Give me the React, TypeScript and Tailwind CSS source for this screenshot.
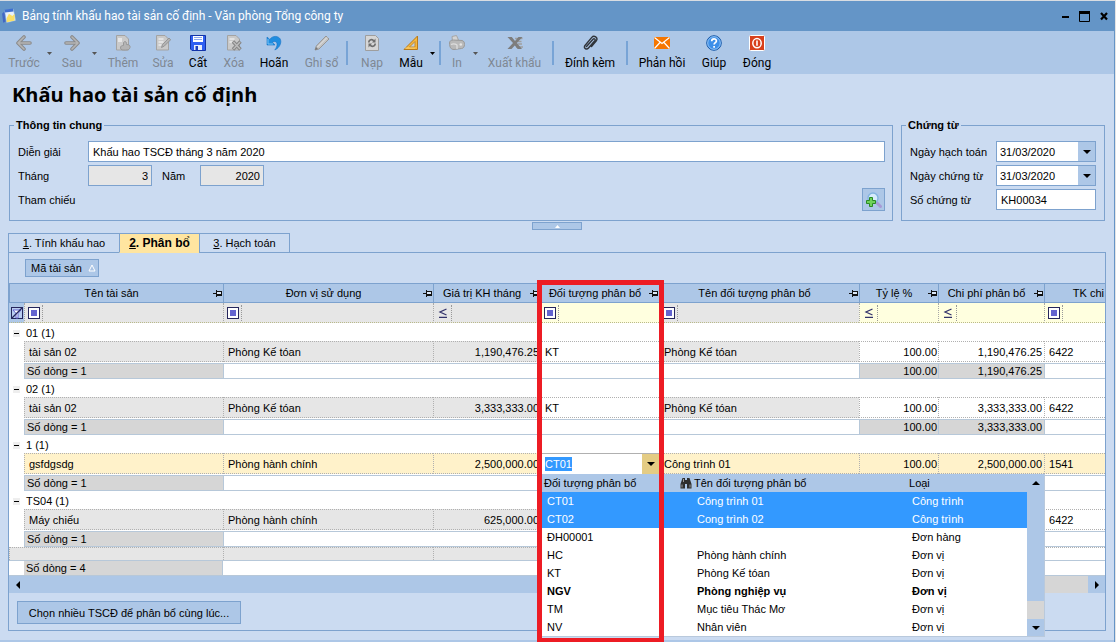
import type { FocusEvent, ReactNode } from 'react';

const uiFont = "font-['Open_Sans','Noto_Sans',sans-serif]";
const barFont = "font-['Roboto','Noto_Sans',sans-serif]";

function Triangle({ dir, className = '' }: { dir: 'up' | 'down' | 'left' | 'right'; className?: string }) {
  const points = {
    up: '0,6 4,2 8,6',
    down: '0,2 8,2 4,6',
    left: '6,0 6,8 2,4',
    right: '2,0 2,8 6,4',
  }[dir];
  return (
    <svg width="8" height="8" viewBox="0 0 8 8" className={className} aria-hidden="true">
      <polygon points={points} fill="currentColor" />
    </svg>
  );
}

function Pin() {
  return (
    <svg width="9" height="9" viewBox="0 0 9 9" className="mr-px shrink-0" aria-hidden="true" shapeRendering="crispEdges">
      <path d="M0 4h3v1H0zM3 1h1v7H3zM4 2h5v1H4zM8 2h1v5H8zM4 5h5v2H4z" fill="#111" />
      <path d="M4 3h4v2H4z" fill="#dce8f7" />
    </svg>
  );
}

/* ---------- toolbar icons ---------- */

const PageShape = () => (
  <path d="M1.500.500h8.500l3.500 3.500v11h-12z" fill="#cacaca" stroke="#a3a3a3" />
);

const icons: Record<string, ReactNode> = {
  back: (
    <>
      <path d="M8 2 2 8l6 6M2.500 8H14" fill="none" stroke="#8a8a8a" strokeWidth="3.600" strokeLinejoin="round" strokeLinecap="round" />
      <path d="M8 2 2 8l6 6M2.500 8H14" fill="none" stroke="#b5b5b5" strokeWidth="1.600" strokeLinejoin="round" strokeLinecap="round" />
    </>
  ),
  forward: (
    <>
      <path d="m8 2 6 6-6 6M13.500 8H2" fill="none" stroke="#8a8a8a" strokeWidth="3.600" strokeLinejoin="round" strokeLinecap="round" />
      <path d="m8 2 6 6-6 6M13.500 8H2" fill="none" stroke="#b5b5b5" strokeWidth="1.600" strokeLinejoin="round" strokeLinecap="round" />
    </>
  ),
  add: (
    <>
      <PageShape />
      <path d="M3 3h4v4H3z" fill="#e6e6e6" />
      <path d="M8.500 7.500c1-1.500 3-1 3 .8v1.200c2.500 0 4 1 3.500 3-.5 2-2 2.500-4.500 2.500s-4.800.3-5-2c-.2-2 1.300-2.500 3-2.500z" fill="#b4b4b4" stroke="#989898" />
    </>
  ),
  edit: (
    <>
      <PageShape />
      <path d="M3.500 4h5M3.500 7h5M3.500 10h3" stroke="#ececec" strokeWidth="1.500" />
      <path d="m6.500 12.500 1-3 6.500-6.500 1.700 1.700-6.500 6.500z" fill="#b4b4b4" stroke="#8c8c8c" strokeWidth=".8" />
    </>
  ),
  save: (
    <>
      <path d="M.5.5h15v15H2l-1.500-1.500z" fill="#2f5ff2" stroke="#1233a8" />
      <path d="M3 1h10v6H3z" fill="#fff" />
      <path d="M4 2.500h8M4 4.500h8" stroke="#8ea8ee" />
      <path d="M4 10h8v5H4z" fill="#e8eefc" />
      <path d="M5.500 11h2.500v4H5.500z" fill="#1c3fc0" />
    </>
  ),
  remove: (
    <>
      <PageShape />
      <path d="M3.500 4h5M3.500 7h3" stroke="#ececec" strokeWidth="1.500" />
      <path d="m7 6.500 7.500 8m0-8-7.500 8" stroke="#858585" strokeWidth="3.400" />
      <path d="m7.500 7 6.500 7m0-7-6.500 7" stroke="#bdbdbd" strokeWidth="1.400" />
    </>
  ),
  undo: (
    <>
      <path d="M1 2v8h8L6.400 7.300C10 4.800 13.500 8.500 8.800 15 16.500 11.500 17 1.500 9.200 1.400 6.600 1.400 5 2.800 3.800 4.400z" fill="#1f8de0" stroke="#1572c4" strokeWidth=".6" />
      <path d="M2 4v5h5" fill="none" stroke="#7cc4f6" />
    </>
  ),
  pencil: (
    <>
      <path d="M1 15l1.300-4L12 1l3 3L5 14z" fill="#c4c4c4" stroke="#969696" />
      <path d="M3.500 12 13 2.500" stroke="#e5e5e5" />
      <path d="m1 15 1-3 2 2z" fill="#777" />
    </>
  ),
  reload: (
    <>
      <path d="M1.500.500h10l3 3v12h-13z" fill="#d6d6d6" stroke="#9e9e9e" />
      <path d="M4.800 7.500c0-3.200 3.700-3.700 5-1.500M11.200 8.500c0 3.200-3.700 3.700-5 1.500" fill="none" stroke="#6e6e6e" strokeWidth="1.600" />
      <path d="M11.500 3.500v4H8zM4.500 12.500v-4H8z" fill="#6e6e6e" />
    </>
  ),
  ruler: (
    <>
      <path d="M1 14.500 14.500 1v13.500z" fill="#f6b73c" stroke="#b87a1c" />
      <path d="M6.500 12 12 6.500V12z" fill="#bcd0e8" stroke="#c58a28" />
      <path d="M3 13.500v-1M5 13.500v-1M7 13.500v-1M9 13.500v-1M11 13.500v-1" stroke="#fff0b5" />
    </>
  ),
  print: (
    <>
      <path d="M3 1.500 7.500.500l2 4.500-6 1.500z" fill="#d4d4d4" stroke="#a6a6a6" />
      <path d="M.5 8c0-2 1.500-3 4-3l8.500.5c2 .5 2.500 2 2.500 4s-1 4-3 4L5 14.500C2 14.500.5 12.500.5 8z" fill="#b9b9b9" stroke="#9a9a9a" />
      <path d="M2 9.500c2-1 4-1 6 .5v4" fill="none" stroke="#dedede" strokeWidth="1.300" />
      <circle cx="11.800" cy="9.500" r="1.300" fill="#e5e5e5" />
    </>
  ),
  excel: (
    <>
      <path d="M8 3.500h7.500M10 6.500h4.500M10.500 9h4.500M9 12h7" stroke="#a0a0a0" strokeWidth="1.500" />
      <path d="M.5 2h4.300L8 6l3.500-4h4L9.800 8l5.200 6h-4.300L7.800 10.500 4.500 14h-4L6 8z" fill="#7d7d7d" />
    </>
  ),
  clip: (
    <path
      d="M4.500 11.500 11 4.300c1.200-1.300 2.800.1 1.800 1.400L6.500 13c-2 2.300-5.300.200-3.500-2.500L9.800 2.400C12-.2 16.500 2.500 14.300 5.800L9.500 11.500"
      fill="none"
      stroke="#30343a"
      strokeWidth="1.400"
      strokeLinecap="round"
    />
  ),
  mail: (
    <>
      <path d="M0 2h16v12H0z" fill="#f57600" />
      <path d="m.5 2.500 7.500 6 7.500-6M.500 13.500l5.500-6M15.500 13.500l-5.500-6" fill="none" stroke="#fff" strokeWidth="1.200" />
    </>
  ),
  help: (
    <>
      <circle cx="8" cy="8" r="7.300" fill="#3d8fe8" stroke="#1a5aa8" />
      <circle cx="8" cy="8" r="6.300" fill="none" stroke="#a9d2fa" strokeWidth=".8" />
      <path d="M5.700 6.300c0-3.200 4.700-3 4.700-.3 0 1.700-2.300 1.700-2.300 3.600M8.100 11v1.700" fill="none" stroke="#fff" strokeWidth="1.700" />
    </>
  ),
  close: (
    <>
      <rect x=".5" y=".5" width="15" height="15" rx="1" fill="#d8401c" stroke="#fff" />
      <ellipse cx="8" cy="8.200" rx="4.200" ry="4.600" fill="none" stroke="#fff" strokeWidth="1.500" />
      <path d="M8 5.500v5.200" stroke="#fff" strokeWidth="1.600" />
    </>
  ),
};

function Tool({ icon, label, width, enabled = false }: { icon: string; label: string; width: string; enabled?: boolean }) {
  return (
    <button type="button" disabled={!enabled} className={`flex shrink-0 flex-col items-center gap-1 whitespace-nowrap ${width} ${enabled ? 'text-black' : 'text-[#7f8893]'}`}>
      <svg width="16" height="16" viewBox="0 0 16 16" aria-hidden="true">{icons[icon]}</svg>
      <span className="leading-4">{label}</span>
    </button>
  );
}

function ToolArrow({ label, width, enabled = false }: { label: string; width: string; enabled?: boolean }) {
  return (
    <button type="button" aria-label={label} disabled={!enabled} className={`flex h-9 shrink-0 items-center justify-center ${width} ${enabled ? 'text-black' : 'text-[#555]'}`}>
      <svg width="5" height="3" viewBox="0 0 5 3" aria-hidden="true"><path d="M0 0h5L2.500 3z" fill="currentColor" /></svg>
    </button>
  );
}

const ToolDivider = () => (
  <span className="flex h-9 w-1 shrink-0 items-center justify-center"><span className="h-6 w-0.5 bg-[#78a4d6]" /></span>
);

/* ---------- grid ---------- */

type Kind = 'text' | 'number';
type Column = { key: string; title: string; kind: Kind; filter: 'grey' | 'yellow'; width: string };

const columns: Column[] = [
  { key: 'unit', title: 'Đơn vị sử dụng', kind: 'text', filter: 'grey', width: 'w-[210px]' },
  { key: 'value', title: 'Giá trị KH tháng', kind: 'number', filter: 'grey', width: 'w-[107px]' },
  { key: 'target', title: 'Đối tượng phân bổ', kind: 'text', filter: 'yellow', width: 'w-[119px]' },
  { key: 'targetName', title: 'Tên đối tượng phân bổ', kind: 'text', filter: 'grey', width: 'w-[200px]' },
  { key: 'rate', title: 'Tỷ lệ %', kind: 'number', filter: 'yellow', width: 'w-[79px]' },
  { key: 'cost', title: 'Chi phí phân bổ', kind: 'number', filter: 'yellow', width: 'w-[106px]' },
];

type Asset = { code: string; name: string; unit: string; value: string; target: string; targetName: string; cost: string; account: string; editing?: boolean };

const assets: Asset[] = [
  { code: '01', name: 'tài sản 02', unit: 'Phòng Kế tóan', value: '1,190,476.25', target: 'KT', targetName: 'Phòng Kế tóan', cost: '1,190,476.25', account: '6422' },
  { code: '02', name: 'tài sản 02', unit: 'Phòng Kế tóan', value: '3,333,333.00', target: 'KT', targetName: 'Phòng Kế tóan', cost: '3,333,333.00', account: '6422' },
  { code: '1', name: 'gsfdgsdg', unit: 'Phòng hành chính', value: '2,500,000.00', target: 'CT01', targetName: 'Công trình 01', cost: '2,500,000.00', account: '1541', editing: true },
  { code: 'TS04', name: 'Máy chiếu', unit: 'Phòng hành chính', value: '625,000.00', target: '', targetName: '', cost: '', account: '6422' },
];

const options = [
  { code: 'CT01', name: 'Công trình 01', type: 'Công trình', state: 'selected' },
  { code: 'CT02', name: 'Cong trình 02', type: 'Công trình', state: 'selected' },
  { code: 'ĐH00001', name: '', type: 'Đơn hàng', state: '' },
  { code: 'HC', name: 'Phòng hành chính', type: 'Đơn vị', state: '' },
  { code: 'KT', name: 'Phòng Kế tóan', type: 'Đơn vị', state: '' },
  { code: 'NGV', name: 'Phòng nghiệp vụ', type: 'Đơn vị', state: 'bold' },
  { code: 'TM', name: 'Mục tiêu Thác Mơ', type: 'Đơn vị', state: '' },
  { code: 'NV', name: 'Nhân viên', type: 'Đơn vị', state: '' },
];

function FilterCell({ title, kind, tone }: { title: string; kind: Kind; tone: 'grey' | 'yellow' }) {
  return (
    <td className={`h-5 border-b border-l border-dotted border-b-[#b9b98a] border-l-[#a8a8a8] p-0 ${tone === 'grey' ? 'bg-[#e6e6e6]' : 'bg-[#ffffdf]'}`}>
      <div className="flex h-4 items-stretch">
        <button type="button" aria-label={`Điều kiện lọc ${title}`} className="flex w-[18px] shrink-0 items-center justify-center border-r border-dotted border-[#999]">
          {kind === 'text' ? (
            <svg width="12" height="12" viewBox="0 0 12 12" aria-hidden="true" shapeRendering="crispEdges">
              <rect x=".5" y=".5" width="11" height="11" fill="#fff" stroke="#26265c" />
              <rect x="3" y="3" width="6" height="6" fill="#6464cf" />
            </svg>
          ) : (
            <svg width="9" height="10" viewBox="0 0 9 10" aria-hidden="true">
              <path d="M8.500 1 2 4l6.500 3M1 9.500h8" fill="none" stroke="#33336b" strokeWidth="1.300" />
            </svg>
          )}
        </button>
        <input aria-label={`Lọc ${title}`} className="w-full min-w-0 bg-transparent px-1 outline-none" />
      </div>
    </td>
  );
}

function TargetMenu() {
  return (
    <div className="absolute top-full left-0 z-20 flex w-[504px] border-r border-b border-[#b9c9dc] bg-white">
      <table className="flex-1 table-fixed border-separate border-spacing-0">
        <thead>
          <tr className="h-[18px] bg-[#adc7e7] text-left">
            <th className="w-[135px] p-0 pl-[3px] font-normal">Đối tượng phân bổ</th>
            <th className="w-[230px] p-0 pl-1 font-normal">
              <span className="flex items-center gap-0.5">
                <svg width="12" height="12" viewBox="0 0 12 12" aria-hidden="true">
                  <path d="M2.500 1H5v2h2V1h2.500l2 6v4.500H7V7H5v4.500H.500V7z" fill="#2e2e2e" />
                  <path d="M2 7.500v3M10 7.500v3M3.500 2v3" stroke="#9a9a9a" />
                </svg>
                Tên đối tượng phân bổ
              </span>
            </th>
            <th className="p-0 pl-[3px] font-normal">Loại</th>
          </tr>
        </thead>
        <tbody>
          {options.map((o) => (
            <tr key={o.code} className={`h-[18px] ${o.state === 'selected' ? 'bg-[#3399ff] text-white' : ''} ${o.state === 'bold' ? 'font-bold' : ''}`}>
              <td className="p-0 pl-1.5">{o.code}</td>
              <td className="p-0 pl-[21px]">{o.name}</td>
              <td className="p-0 pl-1.5">{o.type}</td>
            </tr>
          ))}
        </tbody>
      </table>
      <div className="flex w-[17px] flex-col bg-[#adc7e7]">
        <button type="button" aria-label="Cuộn lên" className="flex h-[18px] items-center justify-center"><Triangle dir="up" /></button>
        <div className="flex-1" />
        <div className="h-[18px] bg-[#d6d6d6]" />
        <button type="button" aria-label="Cuộn xuống" className="flex h-[17px] items-center justify-center"><Triangle dir="down" /></button>
      </div>
    </div>
  );
}

const selectAll = (e: FocusEvent<HTMLInputElement>) => e.currentTarget.select();

function AssetRows({ asset }: { asset: Asset }) {
  const line = 'h-[21px] border-y border-l border-dotted border-[#b0b0b0] p-0';
  const locked = asset.editing ? 'bg-[#fff2ca]' : 'bg-[#e6e6e6]';
  const open = asset.editing ? 'bg-[#fff2ca]' : 'bg-white';
  const sum = 'h-4 border-y border-l border-[#b7c8d9] p-0 leading-[14px]';
  const rate = asset.cost ? '100.00' : '';
  const totals = asset.editing ? { rate: '', cost: '' } : { rate, cost: asset.cost };
  return (
    <>
      <tr>
        <td colSpan={9} className="h-[18px] p-0 pt-0.5">
          <div className="flex items-center gap-1.5 pl-1">
            <button type="button" aria-label={`Thu gọn nhóm ${asset.code}`} className="flex size-[7px] items-center justify-center bg-[#eee]">
              <span className="h-px w-[5px] bg-black" />
            </button>
            <span>{asset.code} (1)</span>
          </div>
        </td>
      </tr>
      <tr>
        <td className="p-0" />
        <td className={`${line} pl-1 ${locked}`}>{asset.name}</td>
        <td className={`${line} pl-1 ${locked}`}>{asset.unit}</td>
        <td className={`${line} pr-px text-right ${locked}`}>{asset.value}</td>
        {asset.editing ? (
          <td className="relative h-[21px] border-t border-l border-[#b0b0b0] bg-white p-0">
            <div className="flex h-5 items-stretch">
              <input aria-label="Đối tượng phân bổ" defaultValue={asset.target} autoFocus onFocus={selectAll} className="w-full min-w-0 pl-1 outline-none selection:bg-[#3399ff] selection:text-white" />
              <button type="button" aria-label="Mở danh sách đối tượng" className="flex w-[17px] shrink-0 items-center justify-center bg-[#e4cc84]"><Triangle dir="down" /></button>
            </div>
            <TargetMenu />
          </td>
        ) : (
          <td className={`${line} pl-1 ${open}`}>{asset.target}</td>
        )}
        <td className={`${line} pl-1 ${locked}`}>{asset.targetName}</td>
        <td className={`${line} pr-px text-right ${open}`}>{rate}</td>
        <td className={`${line} pr-0.5 text-right ${open}`}>{asset.cost}</td>
        <td className={`${line} pl-1 ${open}`}>{asset.account}</td>
      </tr>
      <tr><td colSpan={9} className="h-px p-0" /></tr>
      <tr>
        <td className="p-0" />
        <td className={`${sum} bg-[#d6d6d6] pl-0.5`}>Số dòng = 1</td>
        <td className={sum} />
        <td className={`${sum} border-l-0`} />
        <td className={`${sum} border-l-0`} />
        <td className={`${sum} border-l-0`} />
        <td className={`${sum} bg-[#d6d6d6] pr-px text-right`}>{totals.rate}</td>
        <td className={`${sum} bg-[#d6d6d6] pr-0.5 text-right`}>{totals.cost}</td>
        <td className={sum} />
      </tr>
    </>
  );
}

function AllocationGrid() {
  const head = 'h-5 border-y border-l border-[#7da2ce] bg-[#adc7e7] p-0 font-normal';
  const blank = 'h-[13px] border-t border-l border-dotted border-[#b0b0b0] bg-[#e6e6e6] p-0';
  const total = 'h-4 border-y border-[#b7c8d9] p-0 leading-[14px]';
  return (
    <table className="w-full table-fixed border-separate border-spacing-0 bg-white leading-[14px] whitespace-nowrap">
      <colgroup>
        <col className="w-[15px]" />
        <col className="w-[199px]" />
        {columns.map((c) => <col key={c.key} className={c.width} />)}
        <col />
      </colgroup>
      <thead>
        <tr>
          <th colSpan={2} className={head}>
            <div className="flex items-center"><span className="flex-1">Tên tài sản</span><Pin /></div>
          </th>
          {columns.map((c) => (
            <th key={c.key} className={`${head} relative`}>
              <div className="flex items-center"><span className="flex-1">{c.title}</span><Pin /></div>
              {c.key === 'target' && (
                <div className="pointer-events-none absolute -top-1 -left-1 z-30 h-[363px] w-[127px] border-5 border-[#ed1c24]" />
              )}
            </th>
          ))}
          <th className={`${head} pr-px text-right`}>TK chi</th>
        </tr>
      </thead>
      <tbody>
        <tr>
          <td className="border-b border-dotted border-[#b9b98a] bg-[#adc7e7] p-0">
            <button type="button" aria-label="Xóa bộ lọc" className="ml-0.5 flex">
              <svg width="12" height="12" viewBox="0 0 12 12" aria-hidden="true">
                <rect x=".5" y=".5" width="11" height="11" fill="#b9cdf0" stroke="#26265c" />
                <path d="M2 3h8L7 6.500V11H5V6.500z" fill="#fff" stroke="#6464cf" />
                <path d="M.5 11.500 11.500.5" stroke="#26265c" strokeWidth="1.300" />
              </svg>
            </button>
          </td>
          <FilterCell title="Tên tài sản" kind="text" tone="grey" />
          {columns.map((c) => <FilterCell key={c.key} title={c.title} kind={c.kind} tone={c.filter} />)}
          <FilterCell title="TK chi" kind="text" tone="yellow" />
        </tr>
        {assets.map((a) => <AssetRows key={a.code} asset={a} />)}
        <tr>
          <td colSpan={2} className={blank} />
          {columns.map((c) => <td key={c.key} className={`${blank} ${c.filter === 'yellow' ? 'bg-white' : ''}`} />)}
          <td className="h-[13px] border-t border-l border-dotted border-[#b0b0b0] p-0" />
        </tr>
        <tr>
          <td className={total} />
          <td className={`${total} border-r bg-[#d6d6d6] pl-0.5`}>Số dòng = 4</td>
          <td colSpan={7} className={total} />
        </tr>
      </tbody>
    </table>
  );
}

/* ---------- form parts ---------- */

const box = 'h-[21px] border border-[#7da2ce] outline-none';

function DateField({ id, label }: { id: string; label: string }) {
  return (
    <div className="flex items-center">
      <label htmlFor={id} className="w-[86px] whitespace-nowrap">{label}</label>
      <div className="flex h-[21px] w-[100px] border border-[#7da2ce] bg-white">
        <input id={id} defaultValue="31/03/2020" className="w-full min-w-0 pl-[3px] outline-none" />
        <button type="button" aria-label={`Chọn ${label}`} className="flex w-[17px] shrink-0 items-center justify-center bg-[#adc7e7]"><Triangle dir="down" /></button>
      </div>
    </div>
  );
}

const tab = 'h-5 border border-[#7da2ce] text-center whitespace-nowrap';

export default function App() {
  return (
    <div className="flex min-h-screen flex-col border-t border-r border-t-[#d9dde2] border-r-[#e4e4e4] bg-[#cbdbf1] font-['Liberation_Sans',Arial,sans-serif] text-[11px] leading-4 text-black">
      <div className="flex flex-1 flex-col border-r border-[#6594c6]">
        <header className={`flex h-[30px] items-center bg-[#6495c7] pl-0.5 text-[12px] text-white ${barFont}`}>
          <svg width="15" height="16" viewBox="0 0 13 14" aria-hidden="true">
            <path d="M0 5 3 2v10l-2 1z" fill="#4267c4" />
            <path d="m2 2 8-1 2 10-8 2z" fill="#e7f1fb" stroke="#7ba4d8" strokeWidth=".5" />
            <path d="M2 1.500 9.500.500 10 3 2.500 4z" fill="#3e6fd0" />
            <path d="M4 9 6 5l3 2 2-2v6l-7 1.500z" fill="#f8df66" />
          </svg>
          <span className="pl-[5px]">Bảng tính khấu hao tài sản cố định - Văn phòng Tổng công ty</span>
          <div className="ml-auto flex items-center gap-2.5 pr-1.5 text-black">
            <button type="button" aria-label="Thu nhỏ"><svg width="7" height="11" viewBox="0 0 7 11"><path d="M0 5h7v2H0z" fill="currentColor" /></svg></button>
            <button type="button" aria-label="Phóng to"><svg width="11" height="11" viewBox="0 0 11 11"><path d="M.5 1.500h10v9H.500z" fill="none" stroke="currentColor" /><path d="M0 0h11v3H0z" fill="currentColor" /></svg></button>
            <button type="button" aria-label="Đóng cửa sổ"><svg width="8" height="11" viewBox="0 0 8 11"><path d="m1 2 6 6.500M7 2 1 8.500" stroke="currentColor" strokeWidth="2.200" /></svg></button>
          </div>
        </header>

        <div role="toolbar" className={`flex h-[43px] items-start bg-[#adc7e7] pt-1 pl-1 text-[12px] ${barFont}`}>
          <Tool icon="back" label="Trước" width="w-10" />
          <ToolArrow label="Danh sách trước" width="w-2.5" />
          <Tool icon="forward" label="Sau" width="w-9" />
          <ToolArrow label="Danh sách sau" width="w-2" />
          <Tool icon="add" label="Thêm" width="w-[50px]" />
          <Tool icon="edit" label="Sửa" width="w-[30px]" />
          <Tool icon="save" label="Cất" width="w-10" enabled />
          <Tool icon="remove" label="Xóa" width="w-8" />
          <Tool icon="undo" label="Hoãn" width="w-12" enabled />
          <Tool icon="pencil" label="Ghi sổ" width="w-[47px]" />
          <ToolDivider />
          <Tool icon="reload" label="Nạp" width="w-[46px]" />
          <Tool icon="ruler" label="Mẫu" width="w-8" enabled />
          <ToolArrow label="Chọn mẫu" width="w-[11px]" enabled />
          <ToolDivider />
          <Tool icon="print" label="In" width="w-[30px]" />
          <ToolArrow label="Tùy chọn in" width="w-1.5" />
          <Tool icon="excel" label="Xuất khẩu" width="w-[73px]" />
          <ToolDivider />
          <Tool icon="clip" label="Đính kèm" width="w-[70px]" enabled />
          <ToolDivider />
          <Tool icon="mail" label="Phản hồi" width="w-[66px]" enabled />
          <Tool icon="help" label="Giúp" width="w-[38px]" enabled />
          <Tool icon="close" label="Đóng" width="w-12" enabled />
        </div>

        <main className="flex flex-1 flex-col pr-2 pl-2">
          <h1 className={`h-[43px] pt-[7px] pl-1 text-[20px] leading-7 font-bold ${uiFont}`}>Khấu hao tài sản cố định</h1>

          <div className="flex gap-2 pr-px pl-px">
            <fieldset className="min-w-0 flex-1 border border-[#7da2ce] pr-[7px] pb-2.5 pl-2">
              <legend className="-ml-1 px-0.5 font-bold">Thông tin chung</legend>
              <div className="flex flex-col gap-[3px] pt-2">
                <div className="flex items-center">
                  <label htmlFor="desc" className="w-[70px]">Diễn giải</label>
                  <input id="desc" defaultValue="Khấu hao TSCĐ tháng 3 năm 2020" className={`${box} min-w-0 flex-1 bg-white pl-1`} />
                </div>
                <div className="flex items-center">
                  <label htmlFor="month" className="w-[70px]">Tháng</label>
                  <input id="month" readOnly value="3" className={`${box} w-16 bg-[#e6e6e6] pr-[3px] text-right`} />
                  <label htmlFor="year" className="w-12 pl-2.5">Năm</label>
                  <input id="year" readOnly value="2020" className={`${box} w-16 bg-[#e6e6e6] pr-[3px] text-right`} />
                </div>
                <div className="flex h-[21px] items-center justify-between">
                  <span>Tham chiếu</span>
                  <button type="button" aria-label="Thêm tham chiếu" className="flex size-[23px] items-center justify-center border border-[#7da2ce] bg-[#adc7e7]">
                    <svg width="16" height="16" viewBox="0 0 16 16" aria-hidden="true">
                      <path d="m10.500 10.500 4 4" stroke="#a79ad6" strokeWidth="3" strokeLinecap="round" />
                      <circle cx="7" cy="6" r="5" fill="#d6ebfb" stroke="#84b4e0" strokeWidth="1.400" />
                      <path d="M3.500 5.500h3v3h3v3h-3v3h-3v-3h-3v-3h3z" fill="#6fd25a" stroke="#2a8a24" />
                    </svg>
                  </button>
                </div>
              </div>
            </fieldset>

            <fieldset className="w-[204px] shrink-0 border border-[#7da2ce] pb-2.5 pl-2">
              <legend className="-ml-1 px-0.5 font-bold">Chứng từ</legend>
              <div className="flex flex-col gap-[3px] pt-2">
                <DateField id="posted" label="Ngày hạch toán" />
                <DateField id="issued" label="Ngày chứng từ" />
                <div className="flex items-center">
                  <label htmlFor="number" className="w-[86px]">Số chứng từ</label>
                  <input id="number" defaultValue="KH00034" className={`${box} w-[100px] bg-white pl-1`} />
                </div>
              </div>
            </fieldset>
          </div>

          <button type="button" aria-label="Thu gọn thông tin" className="mt-px flex h-2 w-[50px] items-center justify-center self-center border border-[#7da2ce] bg-[#adc7e7] text-white">
            <svg width="5" height="3" viewBox="0 0 5 3" aria-hidden="true"><path d="M0 3h5L2.500 0z" fill="currentColor" /></svg>
          </button>

          <div role="tablist" className="relative mt-[3px] -mb-px flex">
            <button type="button" role="tab" className={`${tab} w-28`}><u>1</u>. Tính khấu hao</button>
            <button type="button" role="tab" aria-selected="true" className={`${tab} -ml-px w-[81px] border-b-[#ffe5a0] bg-[#ffe5a0] text-[12px] font-bold`}><u>2</u>. Phân bổ</button>
            <button type="button" role="tab" className={`${tab} -ml-px w-[91px]`}><u>3</u>. Hạch toán</button>
          </div>

          <section className="mb-[9px] border border-[#7da2ce]">
            <div className="py-1.5 pl-4">
              <button type="button" className="flex h-[18px] w-[74px] items-center justify-between border border-[#7da2ce] bg-[#adc7e7] pr-0.5 pl-[5px] whitespace-nowrap">
                Mã tài sản
                <svg width="8" height="8" viewBox="0 0 8 8" aria-hidden="true"><path d="M4 1 1 7h6z" fill="#a9c3e4" stroke="#fff" /></svg>
              </button>
            </div>
            <AllocationGrid />
            <div className="flex h-[17px] bg-[#adc7e7]">
              <button type="button" aria-label="Cuộn trái" className="flex w-[17px] items-center justify-center"><Triangle dir="left" /></button>
              <div className="flex-1" />
              <div className="w-[180px] bg-[#d6d6d6]" />
              <button type="button" aria-label="Cuộn phải" className="flex w-[17px] items-center justify-center"><Triangle dir="right" /></button>
            </div>
            <div className="pt-2 pb-1.5 pl-2">
              <button type="button" className="h-[23px] w-56 border border-[#7da2ce] bg-[#adc7e7] whitespace-nowrap">Chọn nhiều TSCĐ để phân bổ cùng lúc...</button>
            </div>
          </section>
        </main>
        <footer className="h-0.5 bg-[#adc7e7]" />
      </div>
    </div>
  );
}
